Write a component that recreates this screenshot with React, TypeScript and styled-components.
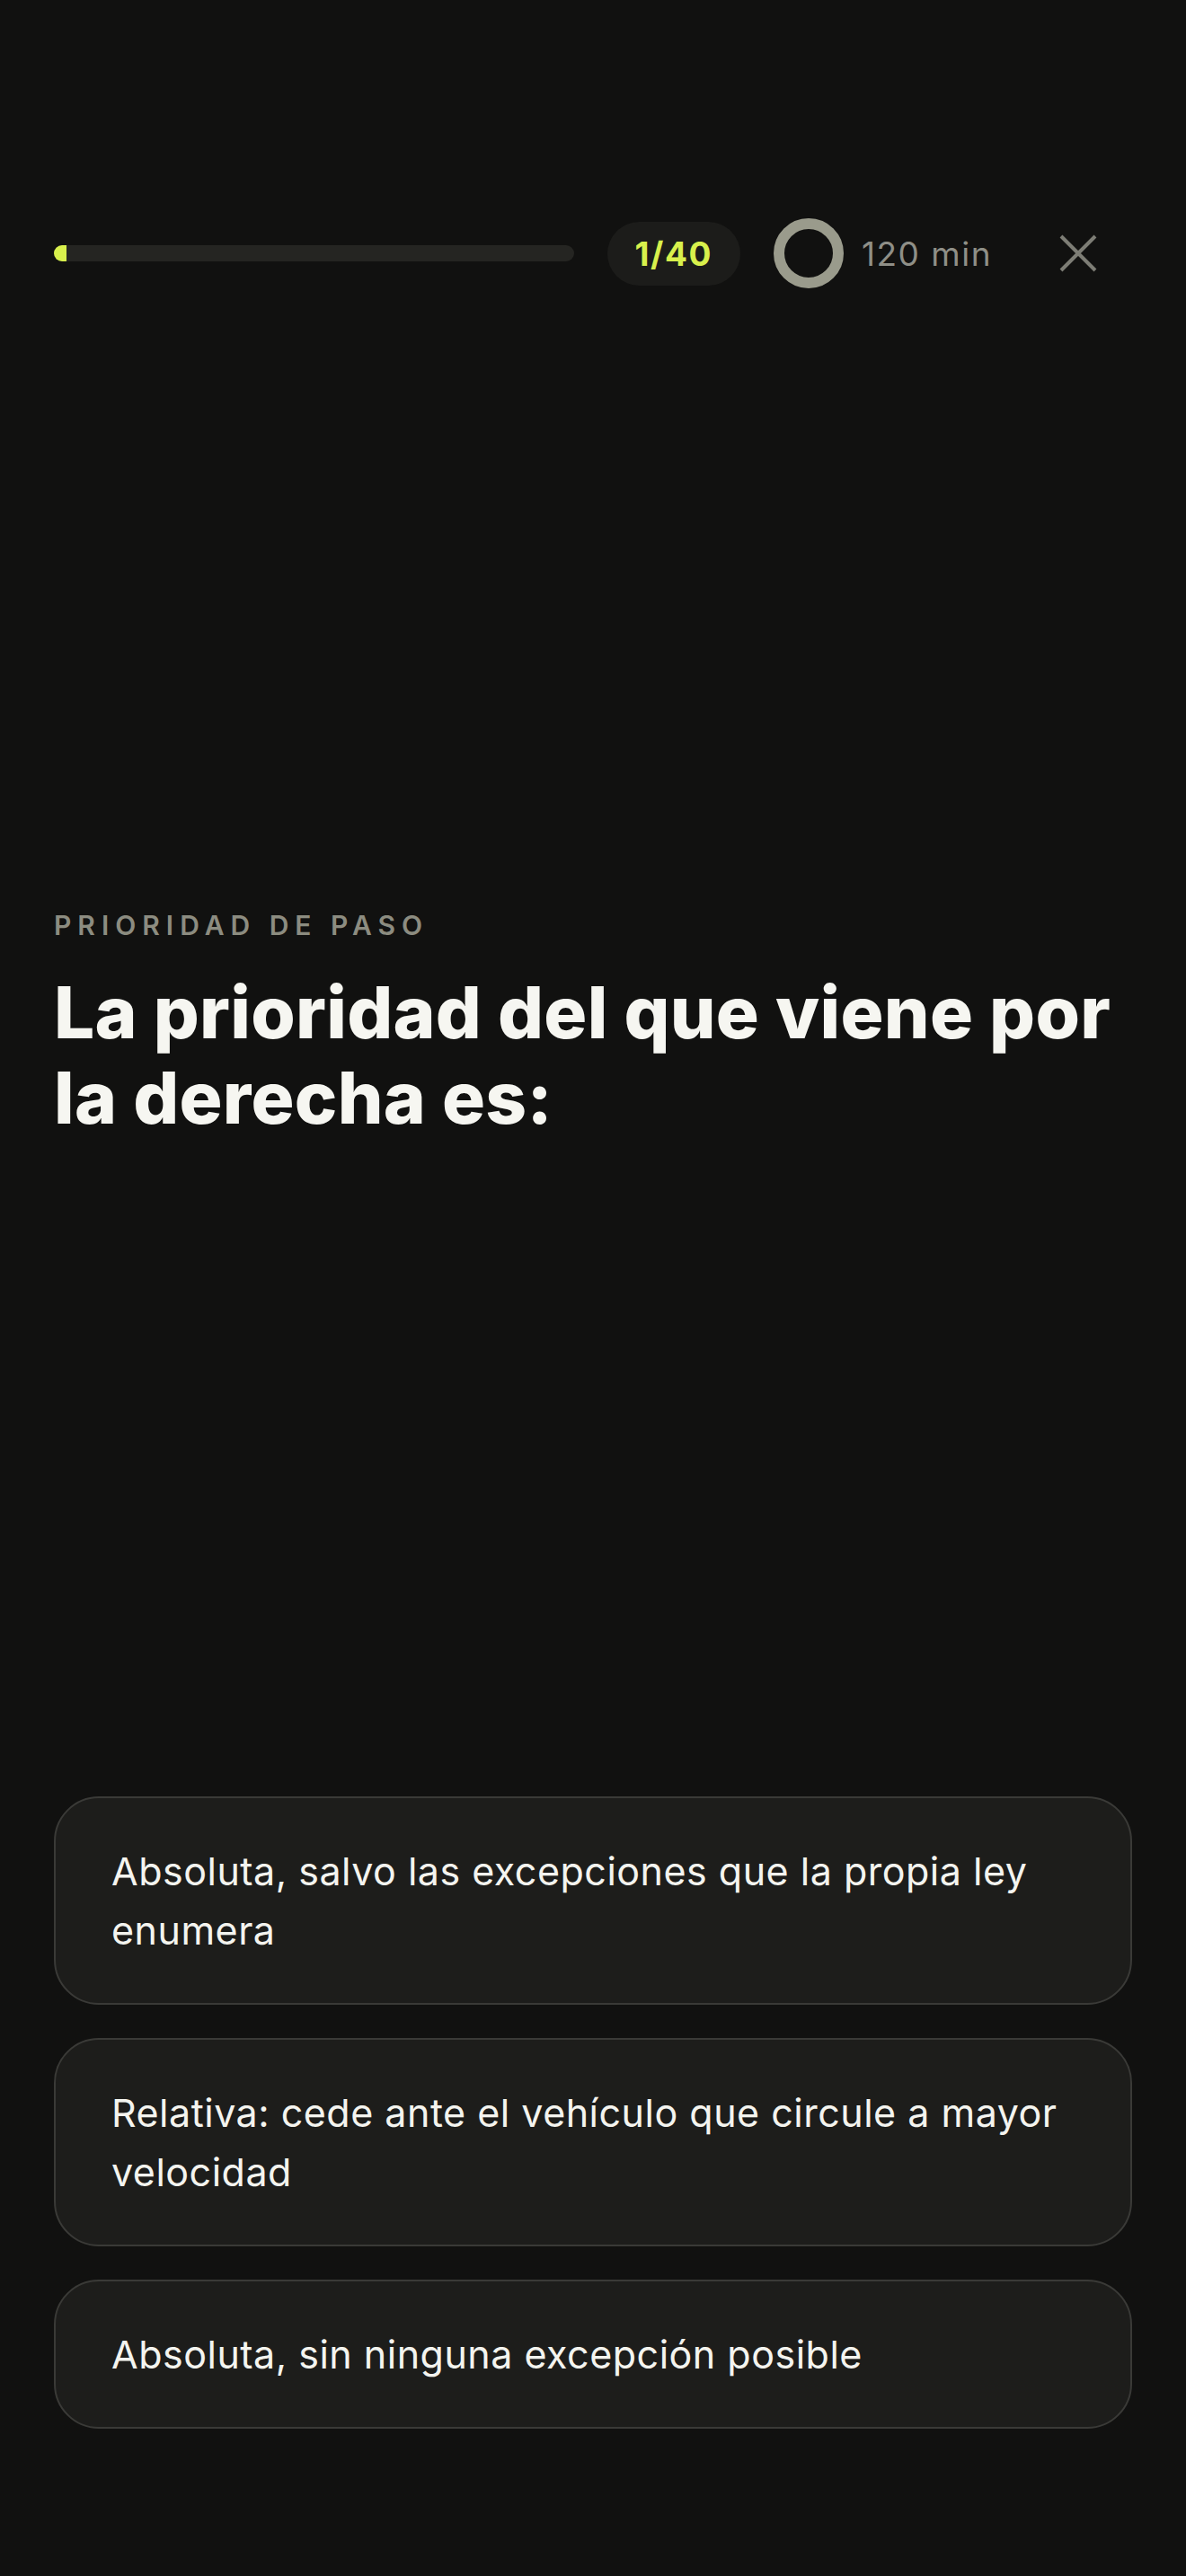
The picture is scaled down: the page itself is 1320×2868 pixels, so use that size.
import React from 'react';
import styled, { createGlobalStyle } from 'styled-components';

const options = [
  'Absoluta, salvo las excepciones que la propia ley enumera',
  'Relativa: cede ante el vehículo que circule a mayor velocidad',
  'Absoluta, sin ninguna excepción posible',
];

const App: React.FC = () => {
  const current = 1;
  const total = 40;

  return (
    <>
      <GlobalStyle />
      <Page>
        <Header>
          <Track>
            <Fill style={{ width: `${Math.max((current / total) * 100, 2.4)}%` }} />
          </Track>
          <Counter>
            {current}/{total}
          </Counter>
          <Timer>
            <svg width="78" height="78" viewBox="0 0 78 78">
              <circle cx="39" cy="39" r="33" fill="none" stroke="#9a9b8c" strokeWidth="12" />
            </svg>
            <span>120 min</span>
          </Timer>
          <CloseButton type="button" aria-label="Cerrar">
            <svg width="44" height="44" viewBox="0 0 44 44">
              <path d="M3 3 L41 41 M41 3 L3 41" stroke="#7d7d75" strokeWidth="4" fill="none" />
            </svg>
          </CloseButton>
        </Header>

        <Question>
          <Topic>Prioridad de paso</Topic>
          <Title>La prioridad del que viene por la derecha es:</Title>
        </Question>

        <Options>
          {options.map((text) => (
            <Option key={text} type="button">
              {text}
            </Option>
          ))}
        </Options>
      </Page>
    </>
  );
};

export default App;

const GlobalStyle = createGlobalStyle`
  html, body {
    margin: 0;
    padding: 0;
    background: #111110;
  }

  body {
    font-family: Inter, 'Liberation Sans', Arial, sans-serif;
    color: #f4f4ef;
  }
`;

const Page = styled.div`
  min-height: 2868px;
  box-sizing: border-box;
  display: flex;
  flex-direction: column;
  padding: 242px 60px 164px;
`;

const Header = styled.header`
  display: flex;
  align-items: center;
  height: 80px;
`;

const Track = styled.div`
  flex: 1;
  height: 18px;
  border-radius: 9px;
  background: #252522;
  overflow: hidden;
`;

const Fill = styled.div`
  height: 100%;
  background: #d8f04c;
`;

const Counter = styled.div`
  margin-left: 37px;
  height: 71px;
  padding: 0 31px;
  border-radius: 36px;
  background: #1c1c1a;
  display: flex;
  align-items: center;
  color: #d8f04c;
  font-size: 37px;
  font-weight: 700;
  letter-spacing: 1.5px;
`;

const Timer = styled.div`
  margin-left: 37px;
  display: flex;
  align-items: center;
  gap: 20px;

  svg {
    display: block;
  }

  span {
    color: #8f8f87;
    font-size: 37px;
    letter-spacing: 1.5px;
  }
`;

const CloseButton = styled.button`
  margin: 0 20px 0 56px;
  width: 80px;
  height: 80px;
  padding: 0;
  border: 0;
  background: transparent;
  display: flex;
  align-items: center;
  justify-content: center;
  cursor: pointer;
`;

const Question = styled.section`
  margin-top: 690px;
`;

const Topic = styled.div`
  color: #8c8c80;
  font-size: 30px;
  line-height: 36px;
  font-weight: 600;
  letter-spacing: 7px;
  text-transform: uppercase;
`;

const Title = styled.h1`
  margin: 31px 0 0;
  color: #f6f6f1;
  font-size: 80px;
  line-height: 95px;
  font-weight: 800;
  letter-spacing: 0.3px;
`;

const Options = styled.div`
  margin-top: auto;
  display: flex;
  flex-direction: column;
  gap: 37px;
`;

const Option = styled.button`
  width: 100%;
  box-sizing: border-box;
  padding: 48px 40px 48px 62px;
  border: 2px solid #3a3a37;
  border-radius: 50px;
  background: #1d1d1b;
  color: #f4f4ef;
  font-family: Inter, 'Liberation Sans', Arial, sans-serif;
  font-size: 43px;
  line-height: 66px;
  letter-spacing: 0.5px;
  text-align: left;
  cursor: pointer;
`;
